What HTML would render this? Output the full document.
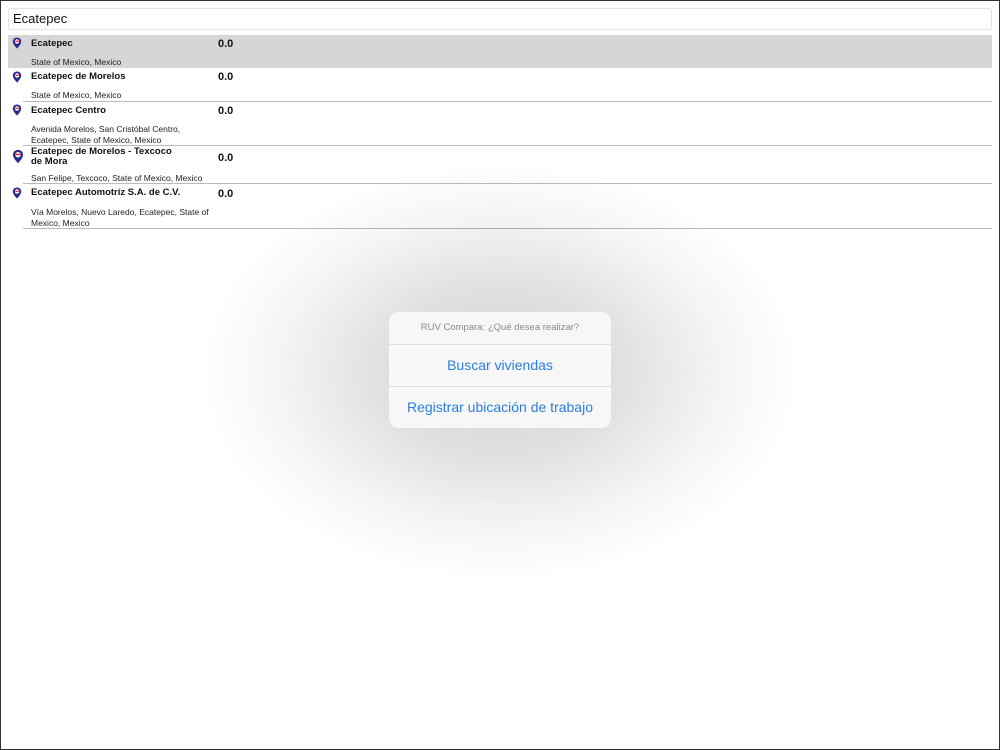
<!DOCTYPE html>
<html><head><meta charset="utf-8"><style>
body{margin:0;width:1000px;height:750px;overflow:hidden;background:#fff;font-family:"Liberation Sans",sans-serif;position:relative}
.frame{position:absolute;left:0;top:0;width:998px;height:748px;border:1px solid #333;z-index:5}
.search{position:absolute;left:8px;top:8px;width:978px;height:20px;border:1px solid #e4e4e4;border-radius:3px;font-size:13px;line-height:20px;padding-left:4px;color:#111}
.row{position:absolute;left:8px;width:984px}
.sel{background:#d6d6d6}
.t{position:absolute;left:23px;font-size:9.5px;font-weight:bold;color:#111;line-height:10px}
.v{position:absolute;left:210px;font-size:11px;font-weight:bold;color:#111}
.s{position:absolute;left:23px;font-size:8.5px;color:#222;line-height:10.5px}
.line{position:absolute;left:15px;right:0;height:1px;background:#bbb}
.pin{position:absolute;left:4px}
.glow{position:absolute;left:200px;top:170px;width:600px;height:420px;background:radial-gradient(ellipse 50% 50% at 50% 48%,rgba(0,0,0,0.17) 0%,rgba(0,0,0,0.12) 40%,rgba(0,0,0,0.04) 75%,rgba(0,0,0,0) 100%)}
.pop{position:absolute;left:389px;top:312px;width:222px;height:116px;background:#f7f7f7;border-radius:9px}
.pop div{text-align:center}
</style></head><body>
<div class="frame"></div>
<div class="search">Ecatepec</div>
<svg width="0" height="0" style="position:absolute"><defs><g id="p"><path d="M5 0.5C2.5 0.5 0.8 2.3 0.8 4.6 0.8 7.5 5 11.5 5 11.5S9.2 7.5 9.2 4.6C9.2 2.3 7.5 0.5 5 0.5Z" fill="#2a2c8a"/><circle cx="5" cy="4.5" r="2.2" fill="#fff"/><path d="M3.2 4.3h3.6" stroke="#d22" stroke-width="1.2"/></g></defs></svg>
<div class="row sel" style="top:35px;height:33px">
<svg class="pin" style="top:2px" width="10" height="12"><use href="#p"/></svg>
<div class="t" style="top:4px">Ecatepec</div><div class="v" style="top:3px">0.0</div>
<div class="s" style="top:22px">State of Mexico, Mexico</div></div>
<div class="row" style="top:68px;height:34px">
<svg class="pin" style="top:3px" width="10" height="12"><use href="#p"/></svg>
<div class="t" style="top:4px">Ecatepec de Morelos</div><div class="v" style="top:3px">0.0</div>
<div class="s" style="top:22px">State of Mexico, Mexico</div><div class="line" style="top:33px"></div></div>
<div class="row" style="top:102px;height:44px">
<svg class="pin" style="top:2px" width="10" height="12"><use href="#p"/></svg>
<div class="t" style="top:4px">Ecatepec Centro</div><div class="v" style="top:3px">0.0</div>
<div class="s" style="top:22px">Avenida Morelos, San Cristóbal Centro,<br>Ecatepec, State of Mexico, Mexico</div><div class="line" style="top:43px"></div></div>
<div class="row" style="top:146px;height:38px">
<svg class="pin" style="top:3px" width="12" height="15" viewBox="0 0 10 12"><use href="#p"/></svg>
<div class="t" style="top:1px">Ecatepec de Morelos - Texcoco<br>de Mora</div><div class="v" style="top:6px">0.0</div>
<div class="s" style="top:27px">San Felipe, Texcoco, State of Mexico, Mexico</div><div class="line" style="top:37px"></div></div>
<div class="row" style="top:184px;height:45px">
<svg class="pin" style="top:3px" width="10" height="12"><use href="#p"/></svg>
<div class="t" style="top:4px">Ecatepec Automotríz S.A. de C.V.</div><div class="v" style="top:4px">0.0</div>
<div class="s" style="top:23px">Vía Morelos, Nuevo Laredo, Ecatepec, State of<br>Mexico, Mexico</div><div class="line" style="top:44px"></div></div>
<div class="glow"></div>
<div class="pop">
<div style="height:32px;line-height:32px;font-size:9.5px;color:#8a8a8a;border-bottom:1px solid #e0e0e0">RUV Compara: ¿Qué desea realizar?</div>
<div style="height:41px;line-height:41px;font-size:14px;color:#2a7fd8;border-bottom:1px solid #e0e0e0">Buscar viviendas</div>
<div style="height:41px;line-height:41px;font-size:14px;color:#2a7fd8">Registrar ubicación de trabajo</div>
</div>
</body></html>
